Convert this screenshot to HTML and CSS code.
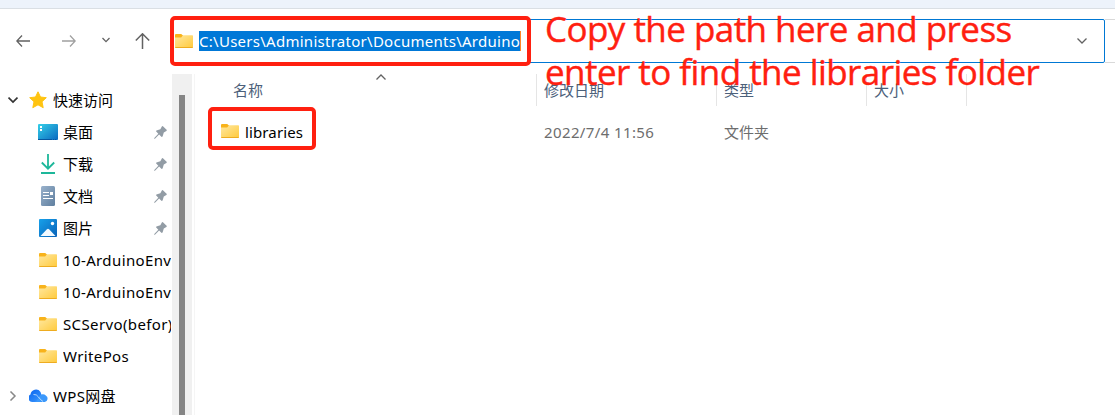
FILE: index.html
```html
<!DOCTYPE html>
<html lang="zh-CN">
<head>
<meta charset="utf-8">
<title>Arduino</title>
<link rel="stylesheet" href="styles.css">
</head>
<body>
<svg class="defs" aria-hidden="true">
  <defs>
    <linearGradient id="gFolder" x1="0" y1="0" x2="1" y2="1"><stop offset="0" stop-color="#ffe8a0"/><stop offset="1" stop-color="#ffca3c"/></linearGradient>
    <linearGradient id="gDesk" x1="0" y1="0" x2="1" y2="1"><stop offset="0" stop-color="#35d0e8"/><stop offset="1" stop-color="#0a68c0"/></linearGradient>
    <linearGradient id="gDoc" x1="0" y1="0" x2="1" y2="1"><stop offset="0" stop-color="#9ab2cc"/><stop offset="1" stop-color="#5f7f9f"/></linearGradient>
    <linearGradient id="gPic" x1="0" y1="0" x2="1" y2="1"><stop offset="0" stop-color="#17a1ea"/><stop offset="1" stop-color="#0a62b8"/></linearGradient>
    <linearGradient id="gCloud" x1="0" y1="0" x2="1" y2="1"><stop offset="0" stop-color="#0a63ee"/><stop offset="1" stop-color="#3f9dff"/></linearGradient>
    <symbol id="folder" viewBox="0 0 18 14"><path d="M0 1Q0 0 1 0H6.2L8 1.500V4H0Z" fill="#f8b31b"/><path d="M0 3.500H6.200L8 1.300H17.300Q18 1.300 18 2V13Q18 14 17 14H1Q0 14 0 13Z" fill="url(#gFolder)"/><path d="M.3 13.500H17.700" stroke="#eeac20"/></symbol>
    <symbol id="pin" viewBox="0 0 13 13"><path d="M8 .2Q8.600 -.2 9.200 .4L12.600 3.800Q13.100 4.500 12.400 5L9.800 6.600 8.600 10.600 7.600 11 5.100 8.600 1.200 12.500 0 13 .5 11.700 4.300 7.700 2 5.300 2.400 4.400 6.300 3.200Z" fill="#929ca5"/></symbol>
  </defs>
</svg>
<div class="window">
  <div class="tabstrip"></div>
  <div class="toolbar">
    <div class="nav">
      <svg class="back" width="14" height="14" viewBox="0 0 14 14"><path d="M6 1.500 .8 7 6 12.500M.8 7H14" /></svg>
      <svg class="forward" width="14" height="14" viewBox="0 0 14 14"><path d="M8 1.500 13.200 7 8 12.500M13.200 7H0" /></svg>
      <svg class="recent" width="8" height="6" viewBox="0 0 8 6"><path d="M.5 1 4 4.600 7.500 1" /></svg>
      <svg class="up" width="16" height="16" viewBox="0 0 16 16"><path d="M.8 7.500 7.500 .8 14.200 7.500M7.500 .8V16" /></svg>
    </div>
    <div class="address">
      <svg class="folder" width="18" height="14"><use href="#folder"/></svg>
      <span class="path">C:\Users\Administrator\Documents\Arduino</span>
      <svg class="drop" width="10" height="6" viewBox="0 0 10 6"><path d="M.5 .5 5 5 9.500 .5" /></svg>
      <div class="mark mark-path"></div>
      <p class="note">Copy the path here and press<br>enter to find the libraries folder</p>
    </div>
    <div class="search"></div>
  </div>
  <div class="main">
    <div class="sidebar">
      <div class="item root"><svg class="chev open" width="10" height="8" viewBox="0 0 10 8"><path d="M.5 1.500 5 6 9.500 1.500"/></svg><span class="icon"><svg width="18" height="18" viewBox="0 0 18 18"><path d="M9 .8 11.500 6 17.300 6.700 13 10.700 14.200 16.700 9 13.800 3.800 16.700 5 10.700 .7 6.700 6.500 6Z" fill="#ffc411" stroke="#ffc411" stroke-linejoin="round"/></svg></span><span class="label cjk">快速访问</span></div>
      <div class="item"><span class="icon"><svg width="20" height="16" viewBox="0 0 20 16"><rect width="20" height="16" rx="1" fill="url(#gDesk)"/><path d="M2 3h2M2 6h2" stroke="#fff" stroke-width="1.800"/><path d="M0 15.500h14M15 15.500h1M17 15.500h1" stroke="#0757a0"/></svg></span><span class="label cjk">桌面</span><svg class="pin" width="13" height="13"><use href="#pin"/></svg></div>
      <div class="item"><span class="icon"><svg width="16" height="20" viewBox="0 0 16 20"><path d="M8 0V14.500M1.800 8.500 8 14.700 14.200 8.500M1 19H15" fill="none" stroke="#1db79a" stroke-width="1.800"/></svg></span><span class="label cjk">下载</span><svg class="pin" width="13" height="13"><use href="#pin"/></svg></div>
      <div class="item"><span class="icon"><svg width="14" height="20" viewBox="0 0 14 20"><rect width="14" height="20" rx="1.500" fill="url(#gDoc)"/><path d="M2 6.500h6M2 9.500h6M2 12.500h10" stroke="#fff" stroke-width="1.100"/><path d="M9 6h3v3H9Z" fill="#fff"/></svg></span><span class="label cjk">文档</span><svg class="pin" width="13" height="13"><use href="#pin"/></svg></div>
      <div class="item"><span class="icon"><svg width="18" height="18" viewBox="0 0 18 18"><rect width="18" height="18" rx="1" fill="url(#gPic)"/><path d="M1.500 17 7.700 10.500Q9 9.200 10.300 10.500L16.500 17Z" fill="#f3faff"/><circle cx="13.500" cy="4.500" r="1.700" fill="#fff"/></svg></span><span class="label cjk">图片</span><svg class="pin" width="13" height="13"><use href="#pin"/></svg></div>
      <div class="item"><span class="icon"><svg width="18" height="14"><use href="#folder"/></svg></span><span class="label">10-ArduinoEnv</span></div>
      <div class="item"><span class="icon"><svg width="18" height="14"><use href="#folder"/></svg></span><span class="label">10-ArduinoEnv</span></div>
      <div class="item"><span class="icon"><svg width="18" height="14"><use href="#folder"/></svg></span><span class="label">SCServo(befor)</span></div>
      <div class="item"><span class="icon"><svg width="18" height="14"><use href="#folder"/></svg></span><span class="label">WritePos</span></div>
      <div class="item root cloud"><svg class="chev" width="10" height="10" viewBox="0 0 10 10"><path d="M2.500 .5 7 5 2.500 9.500"/></svg><span class="icon"><svg width="19" height="14" viewBox="0 0 19 14"><path d="M4 13A4 4 0 0 1 1.500 5.500 5.500 5.500 0 0 1 11.500 3L15 13Z" fill="url(#gCloud)"/><path d="M6 13C8 12 9 9 10.500 7A4 4 0 0 1 16.800 6.500 3.500 3.500 0 0 1 15.800 13Z" fill="#3b98fb"/><path d="M4.500 5.500Q7.500 5 9.500 8T14 12.500" fill="none" stroke="#d6ebff" stroke-width=".8"/></svg></span><span class="label wps">WPS网盘</span></div>
    </div>
    <div class="scroll"><div class="thumb"></div></div>
    <div class="files">
      <div class="head">
        <div class="c1">名称<svg class="sort" width="10" height="6" viewBox="0 0 10 6"><path d="M.5 5.500 5 1 9.500 5.500"/></svg></div><div class="c2">修改日期</div><div class="c3">类型</div><div class="c4">大小</div>
      </div>
      <div class="row">
        <div class="c1 name"><svg width="18" height="14"><use href="#folder"/></svg><span class="fname">libraries</span><div class="mark mark-lib"></div></div><div class="c2 date">2022/7/4 11:56</div><div class="c3">文件夹</div>
      </div>
    </div>
  </div>
</div>
</body>
</html>
```
FILE: styles.css
```css
* { box-sizing: border-box; }
body {
  margin: 0;
  background: #fff;
  font: 15px/20px "Noto Sans", "Noto Sans CJK SC", sans-serif;
  color: #000;
}
svg { display: block; flex: none; }
.defs { position: absolute; width: 0; height: 0; }
.window { width: 1115px; height: 415px; overflow: hidden; display: flex; flex-direction: column; }
.tabstrip { height: 9px; flex: none; background: #edf3fb; border-bottom: 1px solid #dadfe4; }
.toolbar { height: 65px; flex: none; display: flex; padding-top: 10px; }
.nav { width: 171px; height: 44px; display: flex; align-items: center; padding-left: 16px; }
.nav path, .drop path, .sort path, .chev path { fill: none; stroke: #626262; stroke-width: 1.3; }
.nav .forward { margin-left: 32px; }
.nav .forward path { stroke: #a0a0a0; }
.nav .recent { margin-left: 26px; margin-top: -3px; }
.nav .up { margin-left: 25px; }
.nav .up path { stroke-width: 1.5; }
.address {
  position: relative;
  width: 934px;
  height: 44px;
  border: 1px solid #0078d4;
  border-radius: 2px;
  display: flex;
  align-items: center;
  padding: 0 17px 0 3px;
}
.path { margin-left: 6px; width: 322px; height: 20px; background: #0078d7; color: #fff; line-height: 20px; white-space: nowrap; border-right: 1px solid #ff8728; letter-spacing: 0.27px; }
.drop { margin-left: auto; }
.search { flex: 1; height: 44px; border: solid #d9d9d9; border-width: 1px 0; }
.mark { position: absolute; border: 4px solid #ff2010; border-radius: 5px; z-index: 2; }
.mark-path { left: -2px; top: -4px; width: 361px; height: 50px; }
.note { position: absolute; left: 373px; top: -13px; margin: 0; font-family: "Open Sans", "Noto Sans", sans-serif; font-size: 35px; line-height: 43px; letter-spacing: -0.55px; word-spacing: 0; -webkit-text-stroke: 0.4px #ff2010; color: #ff2010; white-space: nowrap; z-index: 3; }
.main { flex: 1; min-height: 0; display: flex; }
.sidebar { width: 171px; margin-right: 1px; padding-top: 10px; overflow: hidden; }
.item { height: 32px; display: flex; align-items: center; padding-left: 38px; }
.item.root { padding-left: 8px; }
.item.cloud { margin-top: 8px; }
.icon { width: 20px; display: flex; justify-content: center; flex: none; }
.root .icon { margin-left: 10px; }
.label { margin-left: 5px; white-space: nowrap; flex: 1; min-width: 0; overflow: hidden; letter-spacing: 0.38px; }
.label.cjk { letter-spacing: 0; }
.label.wps { letter-spacing: 0.3px; }
.pin { margin-right: 4px; }
.chev.open path { stroke: #333; stroke-width: 1.7; }
.chev:not(.open) path { stroke: #888; stroke-width: 1.5; }
.scroll { width: 20px; background: #f0f0f0; padding: 21px 0 0 7px; }
.thumb { width: 6px; height: 100%; background: #858585; }
.files { flex: 1; margin-left: 2px; border-left: 1px solid #f5f5f5; }
.head { height: 32px; display: flex; color: #4c607a; }
.head > div { position: relative; border-right: 1px solid #e5e5e5; padding: 6px 0 0 7px; }
.c1 { width: 342px; }
.c2 { width: 180px; }
.c3 { width: 150px; }
.c4 { width: 100px; }
.head > .c1 { padding-left: 38px; }
.sort { position: absolute; left: 181px; top: 0; }
.row { height: 32px; margin-top: 10px; display: flex; align-items: center; color: #6d6d6d; }
.row .c2, .row .c3 { padding-left: 7px; }
.date { letter-spacing: 0.38px; }
.name { position: relative; display: flex; align-items: center; padding-left: 26px; color: #000; }
.name svg { margin-top: -2px; }
.fname { margin-left: 6px; letter-spacing: 0.12px; }
.mark-lib { left: 13px; top: -15px; width: 108px; height: 43px; }
```
